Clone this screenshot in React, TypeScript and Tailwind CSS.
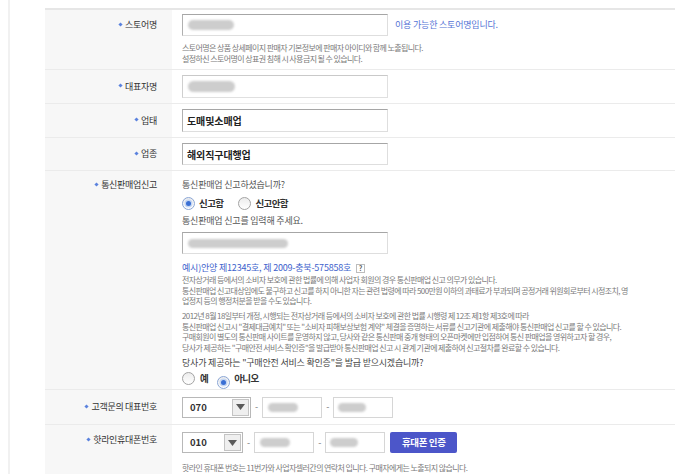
import React from "react";

function Bullet() {
  return <span className="inline-block w-[3px] h-[3px] bg-[#5b82de] rotate-45 mr-[3px] relative top-[-1px]" />;
}

function Blob({ className }: { className: string }) {
  return <span className={"block rounded-full bg-[#cdcdcd] blur-[1.2px] " + className} />;
}

function Radio({ checked }: { checked?: boolean }) {
  return (
    <span
      className={
        "inline-flex shrink-0 items-center justify-center w-[13px] h-[13px] rounded-full border bg-gradient-to-b from-[#ececec] to-white " +
        (checked ? "border-[#8aa6d6]" : "border-[#a3a3a3]")
      }
    >
      {checked && <span className="w-[5px] h-[5px] rounded-full bg-[#3a6fd4] shadow-[0_0_0_1.5px_#c4d6f3]" />}
    </span>
  );
}

function Arrow() {
  return (
    <span className="ml-auto mr-[1px] w-[17px] h-[17px] bg-[#efefef] border border-[#c4c4c4] flex items-center justify-center">
      <svg width="9" height="6" viewBox="0 0 9 6">
        <path d="M0 0H9L4.5 6Z" fill="#5a5a5a" />
      </svg>
    </span>
  );
}

const label = "w-[127px] shrink-0 bg-[#f7f7f7] flex justify-end pr-[15px] text-[9px] tracking-[-0.3px] text-[#333] whitespace-nowrap";
const row = "flex border-b border-[#ebebeb]";
const tiny = "text-[8px] tracking-[-0.6px] text-[#7a7a7a] leading-[10.5px] whitespace-nowrap";
const mid = "text-[9px] tracking-[-0.2px] whitespace-nowrap";

export default function App() {
  return (
    <div className="w-[700px] h-[474px] overflow-hidden bg-white font-['Noto_Sans_CJK_KR',sans-serif]">
      <div className="ml-[8px] h-full border-l-2 border-[#f1f1f1] pl-[35px] pt-[8px]">
        <div className="w-[630px] border-t-2 border-[#e6e6e6]">
          {/* 스토어명 */}
          <div className={row}>
            <div className={label + " items-start pt-[4px] leading-[22px]"}>
              <span className="flex items-center"><Bullet />스토어명</span>
            </div>
            <div className="flex-1 pl-[10px] pt-[4px] pb-[5.5px]">
              <div className="flex items-center">
                <div className="w-[206px] h-[22px] border border-[#dedede] border-t-[#a6a6a6] border-l-[#b0b0b0] flex items-center pl-[5px]">
                  <Blob className="w-[46px] h-[10px]" />
                </div>
                <span className={mid + " ml-[7px] text-[#5675d6]"}>이용 가능한 스토어명입니다.</span>
              </div>
              <div className={tiny + " mt-[5.5px] leading-[11px]"}>
                <div>스토어명은 상품 상세페이지 판매자 기본정보에 판매자 아이디와 함께 노출됩니다.</div>
                <div>설정하신 스토어명이 상표권 침해 시 사용금지 될 수 있습니다.</div>
              </div>
            </div>
          </div>

          {/* 대표자명 */}
          <div className={row}>
            <div className={label + " items-center"}>
              <span className="flex items-center"><Bullet />대표자명</span>
            </div>
            <div className="flex-1 pl-[10px] h-[33px] flex items-center">
              <div className="w-[206px] h-[23px] border border-[#e0e0e0] border-t-[#c9c9c9] border-l-[#cfcfcf] flex items-center pl-[5px]">
                <Blob className="w-[47px] h-[11px]" />
              </div>
            </div>
          </div>

          {/* 업태 */}
          <div className={row}>
            <div className={label + " items-center"}>
              <span className="flex items-center"><Bullet />업태</span>
            </div>
            <div className="flex-1 pl-[10px] h-[33px] flex items-center">
              <div className="w-[206px] h-[23px] border border-[#dedede] border-t-[#a6a6a6] border-l-[#b0b0b0] flex items-center pl-[4px] text-[10px] font-bold tracking-[-0.1px] text-[#222]">
                도매및소매업
              </div>
            </div>
          </div>

          {/* 업종 */}
          <div className={row}>
            <div className={label + " items-center"}>
              <span className="flex items-center"><Bullet />업종</span>
            </div>
            <div className="flex-1 pl-[10px] h-[32px] flex items-center">
              <div className="w-[206px] h-[22px] border border-[#dedede] border-t-[#a6a6a6] border-l-[#b0b0b0] flex items-center pl-[4px] text-[10px] font-bold tracking-[-0.1px] text-[#222]">
                해외직구대행업
              </div>
            </div>
          </div>

          {/* 통신판매업신고 */}
          <div className={row}>
            <div className={label + " items-start pt-[7px] leading-[14px]"}>
              <span className="flex items-center"><Bullet />통신판매업신고</span>
            </div>
            <div className="flex-1 pl-[10px] pt-[7px] pb-[3px]">
              <div className={mid + " leading-[14px] text-[#555]"}>통신판매업 신고하셨습니까?</div>
              <div className="h-[22px] flex items-center">
                <Radio checked />
                <span className="ml-[4px] text-[9.5px] font-bold tracking-[-0.6px] text-[#333]">신고함</span>
                <span className="ml-[15px]"><Radio /></span>
                <span className="ml-[4px] text-[9.5px] font-bold tracking-[-0.6px] text-[#333]">신고안함</span>
              </div>
              <div className={mid + " leading-[14px] text-[#555]"}>통신판매업 신고를 입력해 주세요.</div>
              <div className="mt-[4px] w-[206px] h-[22px] border border-[#dedede] border-t-[#a6a6a6] border-l-[#b0b0b0] flex items-center pl-[5px]">
                <Blob className="w-[100px] h-[9px]" />
              </div>
              <div className={mid + " mt-[7px] leading-[14px] text-[#3e62cc] flex items-center"}>
                <span>예시)안양 제12345호, 제 2009-충북-575858호</span>
                <span className="ml-[5px] inline-flex items-center justify-center w-[9px] h-[9px] border border-[#bdbdbd] text-[7px] font-bold leading-none text-[#555] tracking-normal">?</span>
              </div>
              <div className={tiny}>
                <div>전자상거래 등에서의 소비자 보호에 관한 법률에 의해 사업자 회원의 경우 통신판매업 신고 의무가 있습니다.</div>
                <div>통신판매업 신고대상임에도 불구하고 신고를 하지 아니한 자는 관련 법령에 따라 500만원 이하의 과태료가 부과되며 공정거래 위원회로부터 시정조치, 영</div>
                <div>업정지 등의 행정처분을 받을 수도 있습니다.</div>
              </div>
              <div className={tiny + " mt-[4.5px]"}>
                <div>2012년 8월 18일부터 개정, 시행되는 전자상거래 등에서의 소비자 보호에 관한 법률 시행령 제 12조 제1항 제3호에 따라</div>
                <div>통신판매업 신고시 "결제대금예치" 또는 "소비자 피해보상보험 계약" 체결을 증명하는 서류를 신고기관에 제출해야 통신판매업 신고를 할 수 있습니다.</div>
                <div>구매회원이 별도의 통신판매 사이트를 운영하지 않고, 당사와 같은 통신판매 중개 형태의 오픈마켓에만 입점하여 통신 판매업을 영위하고자 할 경우,</div>
                <div>당사가 제공하는 "구매안전 서비스 확인증"을 발급받아 통신판매업 신고 시 관계 기관에 제출하여 신고절차를 완료할 수 있습니다.</div>
              </div>
              <div className={mid + " mt-[3px] leading-[14px] text-[#444]"}>당사가 제공하는 "구매안전 서비스 확인증"을 발급 받으시겠습니까?</div>
              <div className="h-[16px] flex items-center">
                <Radio />
                <span className="ml-[5px] text-[9.5px] font-bold tracking-[-0.6px] text-[#333]">예</span>
                <span className="ml-[9px]"><Radio checked /></span>
                <span className="ml-[4px] text-[9.5px] font-bold tracking-[-0.6px] text-[#333]">아니오</span>
              </div>
            </div>
          </div>

          {/* 고객문의 대표번호 */}
          <div className={row}>
            <div className={label + " items-center"}>
              <span className="flex items-center"><Bullet />고객문의 대표번호</span>
            </div>
            <div className="flex-1 pl-[10px] h-[34px] flex items-center">
              <div className="w-[69px] h-[21px] border border-[#b8b8b8] flex items-center">
                <span className="pl-[7px] text-[9.5px] font-bold text-[#333]">070</span>
                <Arrow />
              </div>
              <span className="mx-[4px] text-[9px] text-[#777]">-</span>
              <div className="w-[60px] h-[21px] border border-[#d6d6d6] flex items-center pl-[5px]">
                <Blob className="w-[30px] h-[9px]" />
              </div>
              <span className="mx-[4px] text-[9px] text-[#777]">-</span>
              <div className="w-[60px] h-[21px] border border-[#d6d6d6] flex items-center pl-[4px]">
                <Blob className="w-[28px] h-[9px]" />
              </div>
            </div>
          </div>

          {/* 핫라인휴대폰번호 */}
          <div className="flex">
            <div className={label + " items-start pt-[6px] leading-[18px] h-[60px]"}>
              <span className="flex items-center"><Bullet />핫라인휴대폰번호</span>
            </div>
            <div className="flex-1 pl-[10px] pt-[7px]">
              <div className="flex items-center h-[21px]">
                <div className="w-[61px] h-[21px] border border-[#b8b8b8] flex items-center">
                  <span className="pl-[7px] text-[9.5px] font-bold text-[#333]">010</span>
                  <Arrow />
                </div>
                <span className="mx-[4px] text-[9px] text-[#777]">-</span>
                <div className="w-[60px] h-[21px] border border-[#d6d6d6] flex items-center pl-[5px]">
                  <Blob className="w-[30px] h-[9px]" />
                </div>
                <span className="mx-[4px] text-[9px] text-[#777]">-</span>
                <div className="w-[60px] h-[21px] border border-[#d6d6d6] flex items-center pl-[4px]">
                  <Blob className="w-[28px] h-[9px]" />
                </div>
                <button className="ml-[5px] w-[67px] h-[21px] rounded-[2px] bg-[#4c56c9] text-white text-[9.5px] font-bold tracking-[-0.4px]">
                  휴대폰 인증
                </button>
              </div>
              <div className={tiny + " mt-[8.5px] leading-[11px]"}>
                핫라인 휴대폰 번호는 11번가와 사업자셀러간의 연락처 입니다. 구매자에게는 노출되지 않습니다.
              </div>
            </div>
          </div>
        </div>
      </div>
    </div>
  );
}
